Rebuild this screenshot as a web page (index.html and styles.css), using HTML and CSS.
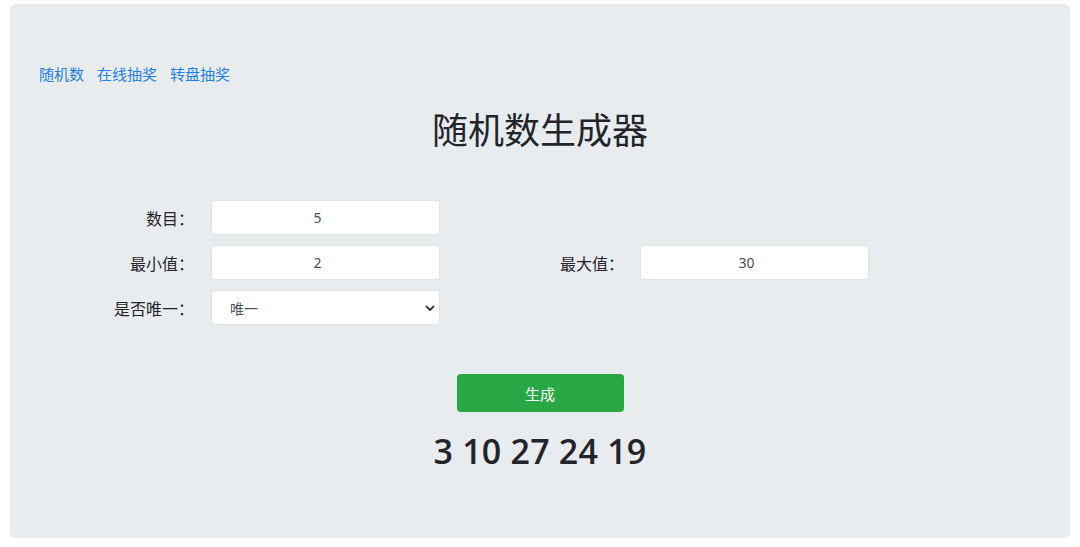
FILE: index.html
```html
<!DOCTYPE html>
<html lang="zh-CN">
<head>
<meta charset="utf-8">
<title>随机数生成器</title>
<link rel="stylesheet" href="styles.css">
</head>
<body>
<div class="panel">
  <nav class="nav">
    <a href="#">随机数</a>
    <a href="#">在线抽奖</a>
    <a href="#">转盘抽奖</a>
  </nav>
  <h1 class="title">随机数生成器</h1>
  <form class="form">
    <label class="lbl">数目：</label>
    <input class="field" type="text" value="5">
    <span class="empty"></span>
    <span class="empty"></span>

    <label class="lbl">最小值：</label>
    <input class="field" type="text" value="2">
    <label class="lbl lbl2">最大值：</label>
    <input class="field" type="text" value="30">

    <label class="lbl">是否唯一：</label>
    <div class="select-wrap">
      <select class="select">
        <option>唯一</option>
        <option>不唯一</option>
      </select>
      <svg class="chev" width="10" height="8" viewBox="0 0 10 8"><path d="M1.5 2.5 L5 6 L8.5 2.5" fill="none" stroke="#343a40" stroke-width="1.8" stroke-linecap="round" stroke-linejoin="round"/></svg>
    </div>
  </form>
  <div class="actions">
    <button class="btn" type="button">生成</button>
  </div>
  <div class="result">3 10 27 24 19</div>
</div>
</body>
</html>
```

FILE: styles.css
```css
* { box-sizing: border-box; }
html, body { margin: 0; background: #ffffff; }
body {
  padding: 4px 10px 9px 10px;
  font-family: "Noto Sans", "Noto Sans CJK SC", sans-serif;
  color: #212529;
}
.panel {
  background: #e9ecef;
  border-radius: 6px;
  height: 534px;
  padding: 60px 29px 0 29px;
  box-shadow: 0 0 2px rgba(0,0,0,0.06);
}
.nav {
  display: flex;
  gap: 13px;
  font-family: "Noto Sans CJK SC", sans-serif;
  font-size: 15px;
  line-height: 20px;
}
.nav a {
  color: #1f7fe9;
  text-decoration: none;
}
.title {
  margin: 22px 0 0 0;
  text-align: center;
  font-family: "Noto Sans CJK SC", sans-serif;
  font-weight: 400;
  font-size: 36px;
  line-height: 44px;
  color: #212529;
}
.form {
  display: grid;
  grid-template-columns: 120px 229px 174px 229px;
  column-gap: 13px;
  row-gap: 10px;
  margin: 50px 0 0 39px;
}
.lbl {
  display: flex;
  align-items: center;
  justify-content: flex-end;
  padding-right: 4px;
  font-family: "Noto Sans CJK SC", sans-serif;
  font-size: 16px;
  color: #212529;
}
.lbl2 { padding-right: 3px; }
.field {
  height: 35px;
  width: 229px;
  border: 1px solid #dfe3e7;
  border-radius: 4px;
  background: #ffffff;
  text-align: center;
  padding: 0 16px 0 0;
  font-family: "Noto Sans", "Noto Sans CJK SC", sans-serif;
  font-size: 14px;
  color: #495057;
  outline: none;
}
.select-wrap {
  position: relative;
  width: 229px;
  height: 35px;
}
.select {
  appearance: none;
  -webkit-appearance: none;
  width: 100%;
  height: 35px;
  border: 1px solid #dfe3e7;
  border-radius: 4px;
  background: #ffffff;
  padding: 0 0 0 18px;
  font-family: "Noto Sans CJK SC", sans-serif;
  font-size: 14px;
  color: #495057;
  outline: none;
}
.chev {
  position: absolute;
  right: 5px;
  top: 14px;
  pointer-events: none;
}
.actions {
  display: flex;
  justify-content: center;
  margin-top: 49px;
}
.btn {
  width: 167px;
  height: 38px;
  border: none;
  border-radius: 4px;
  background: #28a745;
  color: #ffffff;
  font-family: "Noto Sans CJK SC", sans-serif;
  font-size: 15px;
  cursor: pointer;
}
.result {
  text-align: center;
  margin-top: 16px;
  font-family: "Open Sans", "Noto Sans", sans-serif;
  font-weight: 600;
  font-size: 34px;
  letter-spacing: 0.2px;
  line-height: 46px;
  color: #212529;
}
```
